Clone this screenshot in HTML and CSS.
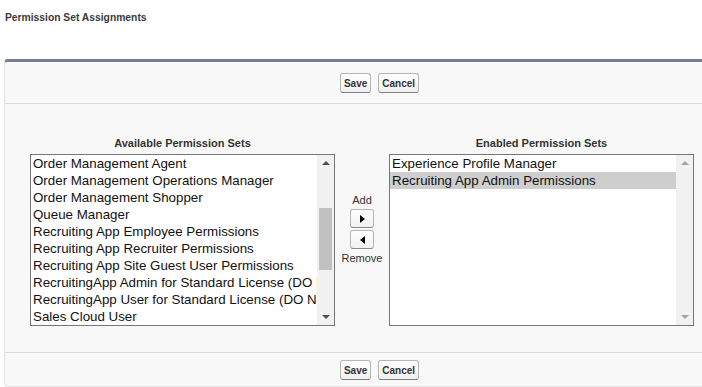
FILE: index.html
```html
<!DOCTYPE html>
<html lang="en">
<head>
    <meta charset="UTF-8">
    <title>Permission Set Assignments</title>
    <link rel="stylesheet" href="styles.css">
</head>
<body>
    <h1 class="page-title">Permission Set Assignments</h1>
    <div class="panel">
        <div class="btn-row top">
            <button class="btn">Save</button>
            <button class="btn">Cancel</button>
        </div>
        <div class="panel-body">
            <div class="dueling">
                <div class="list-col">
                    <div class="list-label">Available Permission Sets</div>
                    <div class="list-box">
                        <ul class="list-items">
                            <li>Order Management Agent</li>
                            <li>Order Management Operations Manager</li>
                            <li>Order Management Shopper</li>
                            <li>Queue Manager</li>
                            <li>Recruiting App Employee Permissions</li>
                            <li>Recruiting App Recruiter Permissions</li>
                            <li>Recruiting App Site Guest User Permissions</li>
                            <li>RecruitingApp Admin for Standard License (DO NOT ASSIGN)</li>
                            <li>RecruitingApp User for Standard License (DO NOT ASSIGN)</li>
                            <li>Sales Cloud User</li>
                        </ul>
                        <div class="scrollbar">
                            <span class="arrow up"></span>
                            <span class="thumb"></span>
                            <span class="arrow down"></span>
                        </div>
                    </div>
                </div>
                <div class="mover">
                    <span class="mover-label">Add</span>
                    <button class="arrow-btn"><span class="tri right"></span></button>
                    <button class="arrow-btn"><span class="tri left"></span></button>
                    <span class="mover-label">Remove</span>
                </div>
                <div class="list-col">
                    <div class="list-label">Enabled Permission Sets</div>
                    <div class="list-box">
                        <ul class="list-items">
                            <li>Experience Profile Manager</li>
                            <li class="selected">Recruiting App Admin Permissions</li>
                        </ul>
                        <div class="scrollbar disabled">
                            <span class="arrow up"></span>
                            <span class="arrow down"></span>
                        </div>
                    </div>
                </div>
            </div>
        </div>
        <div class="btn-row bottom">
            <button class="btn">Save</button>
            <button class="btn">Cancel</button>
        </div>
    </div>
</body>
</html>
```

FILE: styles.css
```css
body {
    margin: 0;
    padding: 0;
    font-family: "Liberation Sans", Arial, sans-serif;
    background: #fff;
    color: #333;
    overflow: hidden;
}

.page-title {
    margin: 0;
    padding: 11px 0 0 5px;
    font-size: 10.3px;
    line-height: 14px;
    font-weight: bold;
    color: #3a3a3a;
}

.panel {
    margin: 34px 0 0 4px;
    background: #f8f8f8;
    border-top: 3px solid #747e96;
    border-left: 1px solid #e2e2e2;
    border-bottom: 1px solid #e2e2e2;
    border-radius: 4px 0 0 4px;
}

.btn-row {
    display: flex;
    justify-content: center;
    gap: 7px;
    padding-left: 52px;
}

.btn-row.top {
    padding-top: 11px;
    padding-bottom: 10px;
    border-bottom: 1px solid #dbdbdb;
}

.btn-row.bottom {
    padding-top: 7px;
    padding-bottom: 6px;
    border-top: 1px solid #dbdbdb;
}

.btn {
    height: 20px;
    padding: 0 3px;
    font-family: "Liberation Sans", Arial, sans-serif;
    font-size: 10px;
    font-weight: bold;
    color: #333;
    background: linear-gradient(#ffffff, #f0f0f0);
    border: 1px solid #b5b5b5;
    border-bottom-color: #7f7f7f;
    border-radius: 3px;
}

.panel-body {
    padding: 32px 0 26px 25px;
}

.dueling {
    display: flex;
    align-items: flex-start;
}

.list-col {
    display: flex;
    flex-direction: column;
    align-items: center;
}

.list-label {
    font-size: 11px;
    line-height: 14px;
    font-weight: bold;
    color: #333;
    margin-bottom: 4px;
}

.list-box {
    width: 303px;
    height: 170px;
    border: 1px solid #767676;
    background: #fff;
    display: flex;
    overflow: hidden;
}

.list-items {
    flex: 1;
    min-width: 0;
    margin: 0;
    padding: 0;
    list-style: none;
}

.list-items li {
    height: 17px;
    line-height: 17px;
    font-size: 13.33px;
    color: #111;
    padding-left: 2px;
    white-space: nowrap;
    overflow: hidden;
}

.list-items li.selected {
    background: #cecece;
}

.scrollbar {
    width: 17px;
    background: #f1f1f1;
    position: relative;
}

.scrollbar .thumb {
    position: absolute;
    left: 2px;
    right: 2px;
    top: 53px;
    height: 62px;
    background: #c1c1c1;
}

.scrollbar .arrow {
    position: absolute;
    left: 5px;
    width: 0;
    height: 0;
    border-left: 4px solid transparent;
    border-right: 4px solid transparent;
}

.scrollbar .arrow.up {
    top: 6px;
    border-bottom: 4px solid #505050;
}

.scrollbar .arrow.down {
    bottom: 6px;
    border-top: 4px solid #505050;
}

.scrollbar.disabled .arrow.up {
    border-bottom-color: #a3a3a3;
}

.scrollbar.disabled .arrow.down {
    border-top-color: #a3a3a3;
}

.mover {
    width: 54px;
    display: flex;
    flex-direction: column;
    align-items: center;
    gap: 2px;
    padding-top: 57px;
}

.mover-label {
    font-size: 11px;
    line-height: 14px;
    color: #333;
}

.arrow-btn {
    width: 24px;
    height: 19px;
    padding: 0;
    display: flex;
    align-items: center;
    justify-content: center;
    background: linear-gradient(#ffffff, #f0f0f0);
    border: 1px solid #b5b5b5;
    border-bottom-color: #8a8a8a;
    border-radius: 3px;
}

.tri {
    width: 0;
    height: 0;
    border-top: 4px solid transparent;
    border-bottom: 4px solid transparent;
}

.tri.right {
    border-left: 5px solid #000;
}

.tri.left {
    border-right: 5px solid #000;
}
```
